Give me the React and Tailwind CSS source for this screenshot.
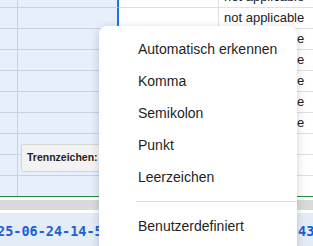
const ROWS = [
  { h: 'h-[8px]', text: 'not applicable' },
  { h: 'h-[21px]', text: 'not applicable' },
  { h: 'h-[21px]', text: 'not applicable' },
  { h: 'h-[21px]', text: 'not applicable' },
  { h: 'h-[21px]', text: 'not applicable' },
  { h: 'h-[21px]', text: 'not applicable' },
  { h: 'h-[21px]', text: 'not applicable' },
  { h: 'h-[21px]', text: '' },
  { h: 'h-[21px]', text: '' },
];

const OPTIONS = ['Automatisch erkennen', 'Komma', 'Semikolon', 'Punkt', 'Leerzeichen'];

function GridRow({ row, last }) {
  const line = last ? 'border-b-0' : 'border-b';
  return (
    <div className={`flex ${row.h} shrink-0`}>
      <div className={`w-[18px] shrink-0 bg-[#e7effc] border-r border-r-[#c9d1de] ${line} border-b-[#c9d1de]`} />
      <div className={`w-[101px] shrink-0 bg-[#e7effc] border-r-2 border-r-[#1a73e8] ${line} border-b-[#c9d1de]`} />
      <div className={`w-[100px] shrink-0 bg-white border-r border-r-[#e0e0e0] ${line} border-b-[#e0e0e0]`} />
      <div className={`flex-1 bg-white pl-[5px] flex items-end pb-[1px] overflow-hidden whitespace-nowrap text-[13px] text-[#222] ${line} border-b-[#e0e0e0]`}>
        {row.text}
      </div>
    </div>
  );
}

export default function App() {
  return (
    <div className="relative w-[313px] h-[246px] overflow-hidden bg-white" style={{ fontFamily: '"Liberation Sans", Arial, sans-serif' }}>
      <div className="flex flex-col h-[197px] border-b border-b-[#1e8e3e] overflow-hidden">
        {ROWS.map((row, i) => (
          <GridRow key={i} row={row} />
        ))}
        <GridRow row={{ h: 'flex-1', text: '' }} last />
      </div>

      <div className="h-[3px] bg-white" />
      <div className="h-[10px] bg-[#dadada]" />
      <div className="h-[3px] bg-white" />
      <div className="h-[33px] bg-[#e4ecf8] flex items-start pt-[8px] overflow-hidden whitespace-nowrap text-[13.5px] font-bold text-[#1a5fd6]" style={{ fontFamily: '"DejaVu Sans Mono", monospace' }}>
        <span className="w-[301px] shrink-0 -ml-[3px] overflow-hidden">25-06-24-14-52-17_messwerte_export_2025-06-24-14-</span>
        <span>43-09</span>
      </div>

      <div className="absolute left-[21px] top-[144px] w-[110px] h-[28px] bg-[#f3f3f3] border border-[#d6d6d6] rounded-[2px] flex items-center pl-[5px]">
        <span className="text-[10.5px] font-bold text-[#222]">Trennzeichen:</span>
      </div>

      <div className="absolute left-[99px] top-[26px] w-[198px] h-[240px] bg-white rounded-[8px] shadow-[0_2px_10px_rgba(0,0,0,0.18)] pt-[7px]">
        {OPTIONS.map((opt) => (
          <div key={opt} className="h-[32px] flex items-center pl-[39px] text-[14px] text-[#1f1f1f]">
            {opt}
          </div>
        ))}
        <div className="ml-[37px] my-[8px] h-px bg-[#dcdcdc]" />
        <div className="h-[32px] flex items-center pl-[39px] text-[14px] text-[#1f1f1f]">Benutzerdefiniert</div>
      </div>
    </div>
  );
}
